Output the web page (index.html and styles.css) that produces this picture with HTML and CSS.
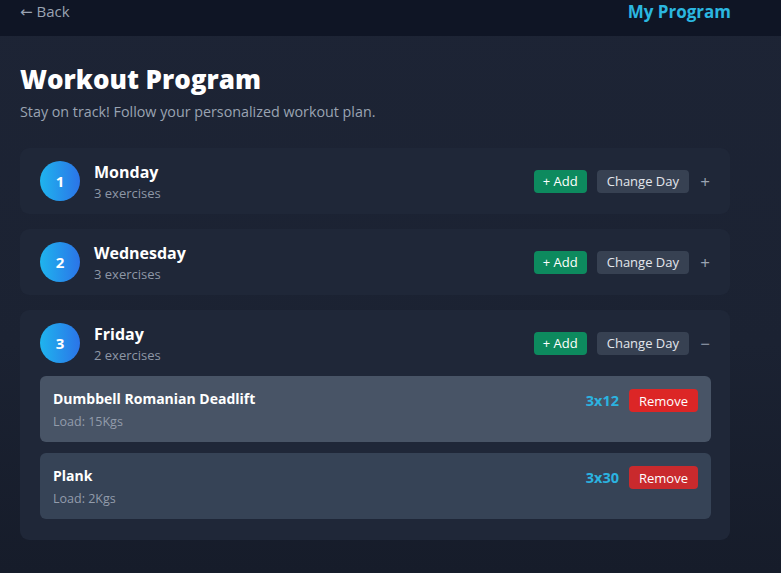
FILE: index.html
```html
<!DOCTYPE html>
<html lang="en">
<head>
<meta charset="utf-8">
<title>Workout Program</title>
<link rel="stylesheet" href="styles.css">
</head>
<body>
<header class="topbar">
  <a class="back" href="#">&larr; Back</a>
  <span class="brand">My Program</span>
</header>
<main class="page">
  <h1 class="title">Workout Program</h1>
  <p class="subtitle">Stay on track! Follow your personalized workout plan.</p>

  <section class="day">
    <div class="day-head">
      <div class="badge">1</div>
      <div class="day-info">
        <div class="day-name">Monday</div>
        <div class="day-count">3 exercises</div>
      </div>
      <div class="actions">
        <button class="btn btn-add">+ Add</button>
        <button class="btn btn-change">Change Day</button>
        <span class="toggle">+</span>
      </div>
    </div>
  </section>

  <section class="day">
    <div class="day-head">
      <div class="badge">2</div>
      <div class="day-info">
        <div class="day-name">Wednesday</div>
        <div class="day-count">3 exercises</div>
      </div>
      <div class="actions">
        <button class="btn btn-add">+ Add</button>
        <button class="btn btn-change">Change Day</button>
        <span class="toggle">+</span>
      </div>
    </div>
  </section>

  <section class="day open">
    <div class="day-head">
      <div class="badge">3</div>
      <div class="day-info">
        <div class="day-name">Friday</div>
        <div class="day-count">2 exercises</div>
      </div>
      <div class="actions">
        <button class="btn btn-add">+ Add</button>
        <button class="btn btn-change">Change Day</button>
        <span class="toggle">&minus;</span>
      </div>
    </div>
    <div class="exercises">
      <div class="exercise hover">
        <div class="ex-info">
          <div class="ex-name">Dumbbell Romanian Deadlift</div>
          <div class="ex-load">Load: 15Kgs</div>
        </div>
        <div class="ex-right">
          <span class="sets">3x12</span>
          <button class="btn btn-remove">Remove</button>
        </div>
      </div>
      <div class="exercise">
        <div class="ex-info">
          <div class="ex-name">Plank</div>
          <div class="ex-load">Load: 2Kgs</div>
        </div>
        <div class="ex-right">
          <span class="sets">3x30</span>
          <button class="btn btn-remove">Remove</button>
        </div>
      </div>
    </div>
  </section>
</main>
</body>
</html>
```
FILE: styles.css
```css
* { box-sizing: border-box; }
html, body { margin: 0; height: 100%; }
body {
  font-family: "Open Sans", "DejaVu Sans", sans-serif;
  background: linear-gradient(180deg, #1d2435 0%, #1b2232 60%, #161c2a 100%);
  color: #fff;
  overflow: hidden;
}
.topbar {
  height: 36px;
  background: #0f1525;
  display: flex;
  align-items: flex-start;
  justify-content: space-between;
  padding: 1px 50px 0 20px;
}
.back {
  color: #9aa3b2;
  text-decoration: none;
  font-size: 15px;
  line-height: 20px;
}
.brand {
  color: #2bb7e0;
  font-weight: 700;
  font-size: 17px;
  line-height: 22px;
}
.page {
  padding: 26px 51px 0 20px;
}
.title {
  margin: 0;
  font-size: 26px;
  font-weight: 800;
  line-height: 34px;
}
.subtitle {
  margin: 6px 0 0;
  color: #9aa3b2;
  font-size: 14.3px;
  line-height: 20px;
}
.day {
  margin-top: 15px;
  background: #1f2738;
  border-radius: 9px;
  padding: 13px 19px 13px 20px;
}
.day:first-of-type { margin-top: 26px; }
.day.open { padding-bottom: 21px; }
.day-head {
  display: flex;
  align-items: center;
  height: 40px;
}
.badge {
  width: 40px;
  height: 40px;
  border-radius: 50%;
  background: linear-gradient(90deg, #1fb4ee 0%, #2b74e8 100%);
  display: flex;
  align-items: center;
  justify-content: center;
  font-weight: 700;
  font-size: 15px;
}
.day-info { margin-left: 14px; flex: 1; padding-top: 1px; }
.day-name { font-weight: 700; font-size: 16px; line-height: 21px; }
.day-count { color: #8e97a6; font-size: 13px; line-height: 18px; margin-top: 1px; }
.actions { display: flex; align-items: center; gap: 10px; }
.btn {
  border: 0;
  font-family: inherit;
  font-size: 13px;
  height: 23px;
  padding: 0 10px;
  border-radius: 4px;
  color: #fff;
  cursor: pointer;
}
.btn-add { background: #0d8a5e; padding: 0 9px; }
.btn-change { background: #374152; color: #e3e6ec; }
.toggle {
  width: 12px;
  color: #9aa3b2;
  font-size: 17px;
  text-align: center;
}
.exercises {
  margin-top: 13px;
  display: flex;
  flex-direction: column;
  gap: 11px;
}
.exercise {
  background: #364356;
  border-radius: 6px;
  height: 66px;
  padding: 13px 13px 0 13px;
  display: flex;
  justify-content: space-between;
}
.exercise.hover { background: #485466; }
.ex-name { font-weight: 700; font-size: 14px; line-height: 20px; }
.ex-load { color: #939cab; font-size: 12.5px; line-height: 18px; margin-top: 4px; }
.ex-right { display: flex; align-items: center; gap: 10px; height: 23px; }
.sets { color: #2bb3e0; font-weight: 700; font-size: 14.5px; }
.btn-remove { background: #c92a2d; padding: 0 10px; }
.exercise.hover .btn-remove { background: #dc2626; }
```
